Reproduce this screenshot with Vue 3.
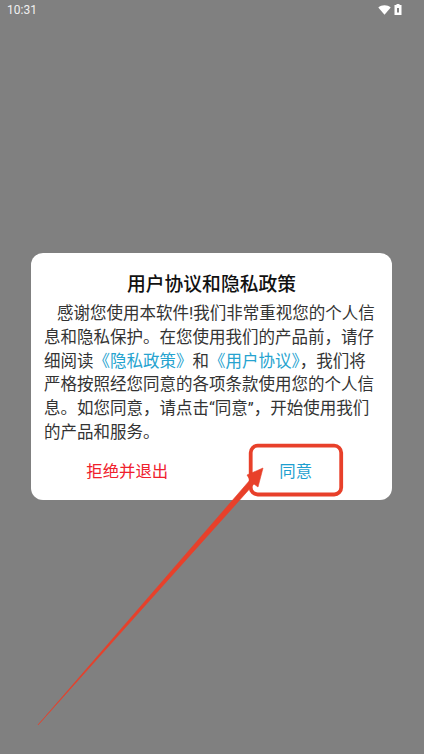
<script setup>
const lead = '感谢您使用本软件!我们非常重视您的个人信息和隐私保护。在您使用我们的产品前\uFF0C请仔细阅读'
</script>

<template>
  <main class="screen">
    <header class="status">
      <span class="time">10:31</span>
      <span class="icons">
        <svg width="13" height="10" viewBox="0 0 13 10"><path d="M0.3 2.400C2 1 4.100 0.300 6.500 0.300S11 1 12.700 2.400L6.500 9.700Z" fill="#fff"/></svg>
        <svg width="8" height="11" viewBox="0 0 8 11"><path fill-rule="evenodd" d="M2.500 0H5.500V1H7.500V11H0.500V1H2.500ZM3 4V8.500H5V4Z" fill="#fff"/></svg>
      </span>
    </header>
    <section class="dialog">
      <h1>用户协议和隐私政策</h1>
      <p>{{ lead }}<a>《隐私政策》</a>和<a>《用户协议》</a>&#65292;我们将严格按照经您同意的各项条款使用您的个人信息。如您同意&#65292;请点击“同意”&#65292;开始使用我们的产品和服务。</p>
      <div class="actions">
        <button class="refuse">拒绝并退出</button>
        <button class="agree">同意</button>
      </div>
    </section>
    <svg class="mark" width="424" height="754" viewBox="0 0 424 754">
      <rect x="250.700" y="445.700" width="90.500" height="48.800" rx="7" fill="none" stroke="#e8402a" stroke-width="3.800"/>
      <path d="M38 725 L250 480 L247 475 L263 468 L258 487 L254 484 Z" fill="#e8402a" stroke="#e8402a" stroke-width="0.600" stroke-linejoin="round"/>
    </svg>
  </main>
</template>

<style scoped>
.screen {
  position: relative;
  width: 424px;
  height: 754px;
  overflow: hidden;
  background: #808080;
  font-family: Roboto, "Noto Sans CJK SC", sans-serif;
}
.status {
  box-sizing: border-box;
  height: 18px;
  padding: 1px 22px 0 7px;
  display: flex;
  align-items: center;
  justify-content: space-between;
  color: #f0f0f0;
  font-size: 12px;
}
.icons {
  display: flex;
  align-items: center;
  gap: 3px;
}
.dialog {
  box-sizing: border-box;
  width: 361px;
  height: 247px;
  margin: 235px 0 0 31px;
  padding-top: 20px;
  background: #fff;
  border-radius: 12px;
}
h1 {
  margin: 0;
  color: #111;
  font-size: 18.800px;
  font-weight: 500;
  line-height: 24px;
  text-align: center;
}
p {
  width: 332px;
  margin: 5px 0 0 13px;
  color: #333;
  font-size: 16.500px;
  line-height: 23.800px;
  text-indent: 13px;
}
a {
  color: #26a3cf;
}
.actions {
  display: grid;
  grid-template-columns: 1fr 1fr;
  padding: 3px 12px 0;
}
button {
  padding: 0;
  height: 44px;
  border: 0;
  background: none;
  font: inherit;
  font-size: 16.400px;
}
.refuse {
  color: #f0202c;
}
.agree {
  color: #1e9fd0;
}
.mark {
  position: absolute;
  inset: 0;
}
</style>
